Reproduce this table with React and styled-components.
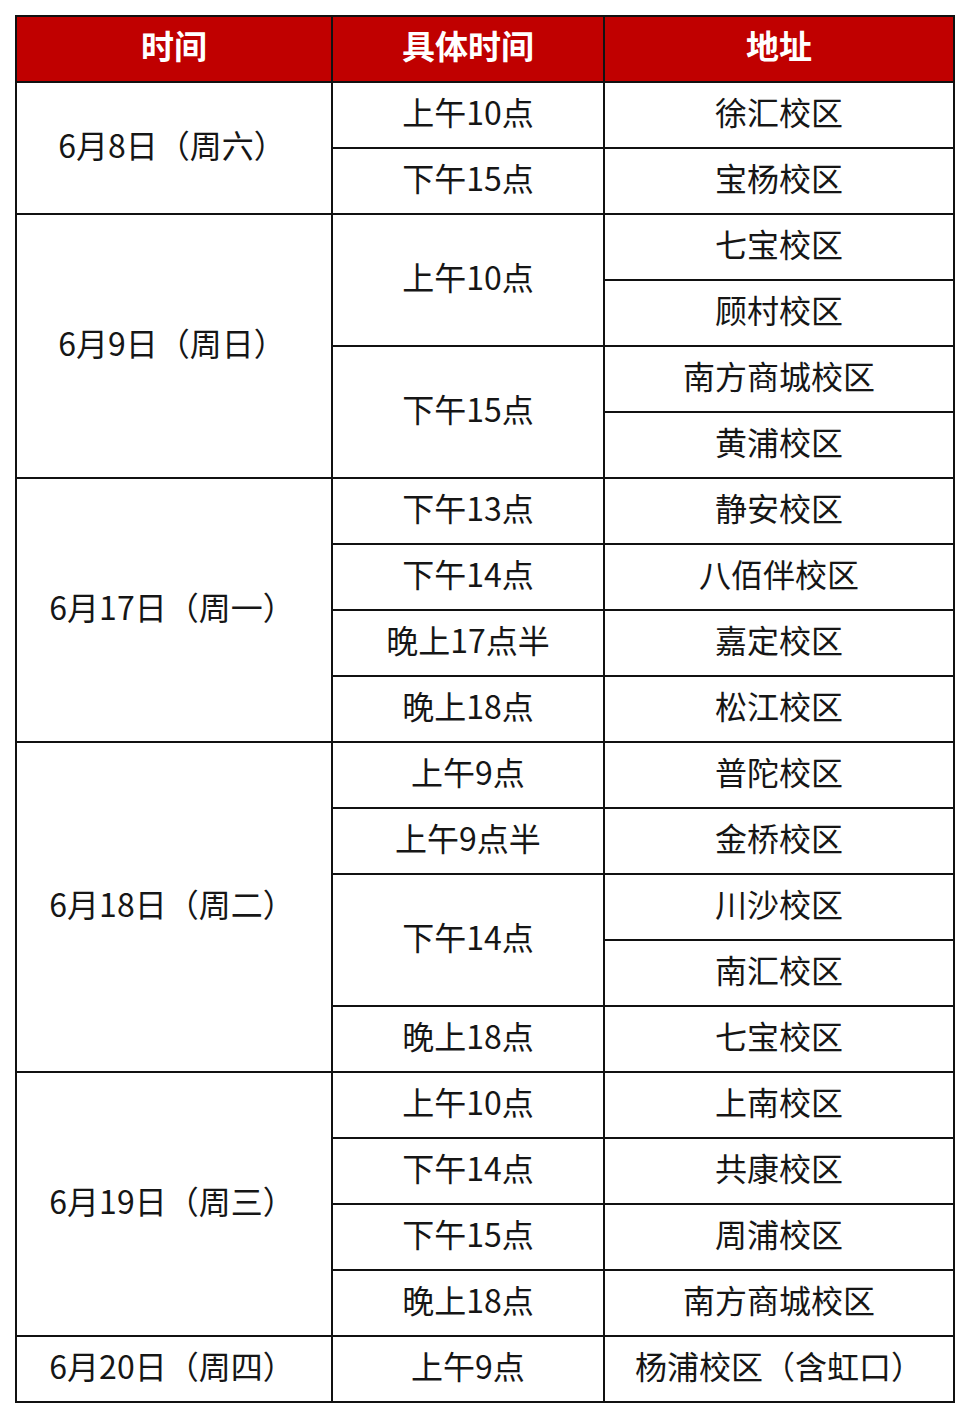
import React from 'react';
import styled, { createGlobalStyle } from 'styled-components';

const schedule = [
  {
    date: '6月8日（周六）',
    slots: [
      { time: '上午10点', places: ['徐汇校区'] },
      { time: '下午15点', places: ['宝杨校区'] },
    ],
  },
  {
    date: '6月9日（周日）',
    slots: [
      { time: '上午10点', places: ['七宝校区', '顾村校区'] },
      { time: '下午15点', places: ['南方商城校区', '黄浦校区'] },
    ],
  },
  {
    date: '6月17日（周一）',
    slots: [
      { time: '下午13点', places: ['静安校区'] },
      { time: '下午14点', places: ['八佰伴校区'] },
      { time: '晚上17点半', places: ['嘉定校区'] },
      { time: '晚上18点', places: ['松江校区'] },
    ],
  },
  {
    date: '6月18日（周二）',
    slots: [
      { time: '上午9点', places: ['普陀校区'] },
      { time: '上午9点半', places: ['金桥校区'] },
      { time: '下午14点', places: ['川沙校区', '南汇校区'] },
      { time: '晚上18点', places: ['七宝校区'] },
    ],
  },
  {
    date: '6月19日（周三）',
    slots: [
      { time: '上午10点', places: ['上南校区'] },
      { time: '下午14点', places: ['共康校区'] },
      { time: '下午15点', places: ['周浦校区'] },
      { time: '晚上18点', places: ['南方商城校区'] },
    ],
  },
  {
    date: '6月20日（周四）',
    slots: [{ time: '上午9点', places: ['杨浦校区（含虹口）'] }],
  },
];

const GlobalStyle = createGlobalStyle`
  html, body {
    margin: 0;
    padding: 0;
    background: #fff;
  }
  body {
    font-family: "Noto Sans CJK SC", "Noto Sans", sans-serif;
  }
`;

const Page = styled.div`
  padding: 15px;
  width: 940px;
`;

const Table = styled.div`
  display: grid;
  grid-template-columns: 314px 270px 348px;
  grid-auto-rows: 64px;
  gap: 2px;
  padding: 2px;
  background: #111;
`;

const HeadCell = styled.div`
  background: #c00000;
  color: #fff;
  font-size: 33px;
  font-weight: 700;
  display: flex;
  align-items: center;
  justify-content: center;
  padding-bottom: 8px;
  box-sizing: border-box;
`;

const Cell = styled.div`
  grid-column: ${(props) => props.col};
  grid-row: span ${(props) => props.span || 1};
  background: #fff;
  color: #161616;
  font-size: 32px;
  font-weight: 400;
  display: flex;
  align-items: center;
  justify-content: center;
  padding-bottom: 8px;
  box-sizing: border-box;
  white-space: nowrap;
`;

const DateText = styled.span`
  margin-right: 4px;
`;

const App = () => {
  return (
    <>
      <GlobalStyle />
      <Page>
        <Table>
          <HeadCell>时间</HeadCell>
          <HeadCell>具体时间</HeadCell>
          <HeadCell>地址</HeadCell>
          {schedule.map((day) => {
            const total = day.slots.reduce((n, s) => n + s.places.length, 0);
            return (
              <React.Fragment key={day.date}>
                <Cell col={1} span={total}>
                  <DateText>{day.date}</DateText>
                </Cell>
                {day.slots.map((slot, i) => (
                  <React.Fragment key={i}>
                    <Cell col={2} span={slot.places.length}>
                      {slot.time}
                    </Cell>
                    {slot.places.map((place, j) => (
                      <Cell col={3} key={j}>
                        {place}
                      </Cell>
                    ))}
                  </React.Fragment>
                ))}
              </React.Fragment>
            );
          })}
        </Table>
      </Page>
    </>
  );
};

export default App;
